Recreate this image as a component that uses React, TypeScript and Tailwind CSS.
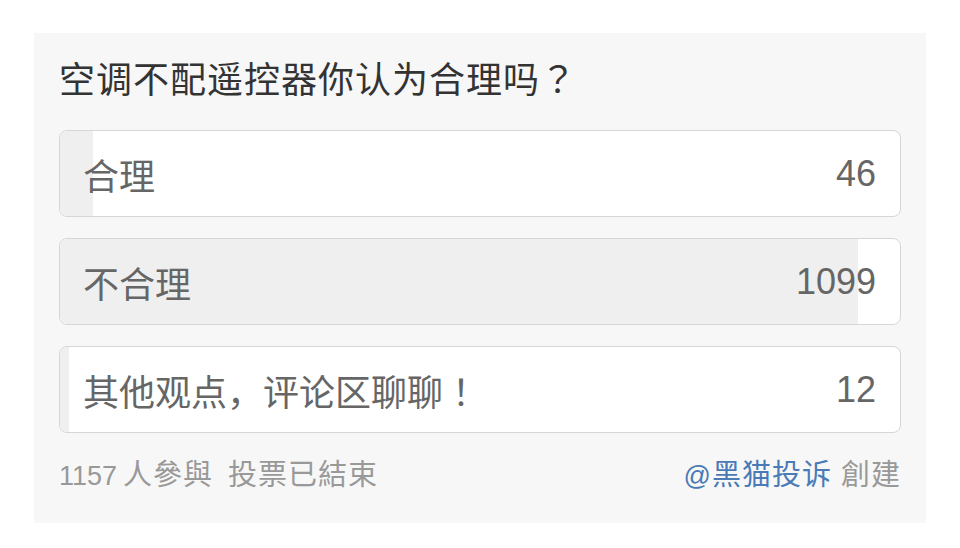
import React from "react";

const options: { label: React.ReactNode; count: number }[] = [
  { label: "合理", count: 46 },
  { label: "不合理", count: 1099 },
  {
    label: (
      <>
        其他观点，评论区聊聊<span className="font-['Noto_Sans_CJK_TC',sans-serif]">！</span>
      </>
    ),
    count: 12,
  },
];
const total = 1157;

export default function App() {
  return (
    <div className="w-[960px] h-[548px] bg-white pt-[33px] pl-[34px] font-['Liberation_Sans','Noto_Sans_CJK_SC',sans-serif]">
      <div className="w-[892px] h-[490px] bg-[#f7f7f7] px-[25px] pt-[26px]">
        <div className="text-[36px] leading-[36px] tracking-[1px] text-[#333333] font-['Noto_Sans_CJK_SC',sans-serif]">
          空调不配遥控器你认为合理吗<span className="font-['Noto_Sans_CJK_TC',sans-serif]">？</span>
        </div>
        <div className="mt-[35px] flex flex-col gap-[21px]">
          {options.map((o, i) => (
            <div
              key={i}
              className="relative h-[87px] rounded-[8px] border border-[#d6d6d6] bg-white overflow-hidden"
            >
              <div
                className="absolute left-0 top-0 bottom-0 bg-[#efefef]"
                style={{ width: `${(o.count / total) * 100}%` }}
              />
              <div className="relative h-full flex items-center justify-between pl-[23px] pr-[24px] text-[36px] leading-[36px] text-[#666666]">
                <span className="font-['Noto_Sans_CJK_SC',sans-serif]">{o.label}</span>
                <span>{o.count}</span>
              </div>
            </div>
          ))}
        </div>
        <div className="mt-[25px] flex justify-between items-baseline text-[29px] leading-[29px] text-[#999999]">
          <div className="flex items-baseline">
            <span className="text-[27px]">1157</span>
            <span className="ml-[6px] tracking-[1px] font-['Noto_Sans_CJK_SC',sans-serif]">人參與</span>
            <span className="ml-[15px] tracking-[1px] font-['Noto_Sans_CJK_SC',sans-serif]">投票已結束</span>
          </div>
          <div className="flex items-baseline">
            <span className="text-[#4a7bb7] text-[27px]">@</span>
            <span className="ml-[1px] text-[#4a7bb7] tracking-[1px] font-['Noto_Sans_CJK_SC',sans-serif]">黑猫投诉</span>
            <span className="ml-[9px] tracking-[1px] font-['Noto_Sans_CJK_SC',sans-serif]">創建</span>
          </div>
        </div>
      </div>
    </div>
  );
}
